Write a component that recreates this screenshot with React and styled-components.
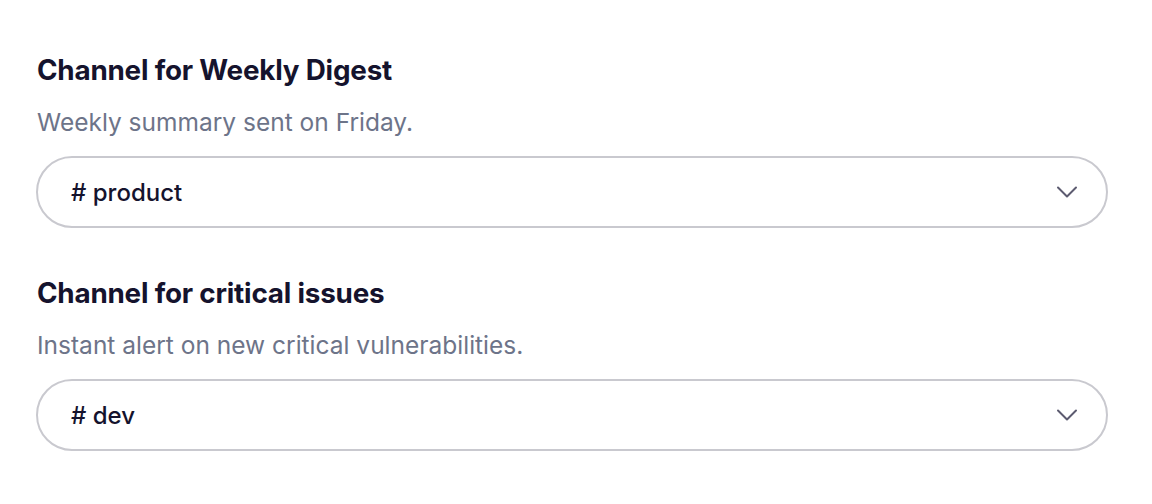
import React from 'react';
import styled, {createGlobalStyle} from 'styled-components';

const GlobalStyle = createGlobalStyle`
  body {
    margin: 0;
    background: #ffffff;
    font-family: Inter, "Noto Sans", sans-serif;
  }
`;

const channels = [
  {
    title: 'Channel for Weekly Digest',
    hint: 'Weekly summary sent on Friday.',
    value: 'product',
  },
  {
    title: 'Channel for critical issues',
    hint: 'Instant alert on new critical vulnerabilities.',
    value: 'dev',
  },
];

function ChevronDown() {
  return (
    <svg width="24" height="24" viewBox="0 0 24 24" fill="none" stroke="#5c5b70" strokeWidth="2" strokeLinecap="round" strokeLinejoin="round">
      <path d="M3 7.5l9 9 9-9" />
    </svg>
  );
}

function App() {
  return (
    <>
      <GlobalStyle />
      <ScPage>
        {channels.map(item => (
          <ScField key={item.title}>
            <ScTitle>{item.title}</ScTitle>
            <ScHint>{item.hint}</ScHint>
            <ScSelect>
              <ScValue># {item.value}</ScValue>
              <ChevronDown />
            </ScSelect>
          </ScField>
        ))}
      </ScPage>
    </>
  );
}

const ScPage = styled.div`
  display: flex;
  flex-direction: column;
  gap: 47px;
  width: 1072px;
  padding: 52px 0 0 36px;
`;

const ScField = styled.div`
  display: flex;
  flex-direction: column;
`;

const ScTitle = styled.h2`
  margin: 0;
  font-size: 27.8px;
  line-height: 36px;
  font-weight: 700;
  color: #15132d;
  letter-spacing: -0.2px;
  padding-left: 1px;
`;

const ScHint = styled.p`
  margin: 18px 0 18px;
  font-size: 24.5px;
  line-height: 32px;
  font-weight: 400;
  color: #6d7489;
  padding-left: 1px;
`;

const ScSelect = styled.div`
  box-sizing: border-box;
  height: 72px;
  border: 2px solid #c9c9cf;
  border-radius: 36px;
  display: flex;
  align-items: center;
  justify-content: space-between;
  padding: 0 27px 0 33px;
  background: #fff;
`;

const ScValue = styled.span`
  font-size: 24px;
  font-weight: 500;
  color: #15132d;
`;

export default App;
